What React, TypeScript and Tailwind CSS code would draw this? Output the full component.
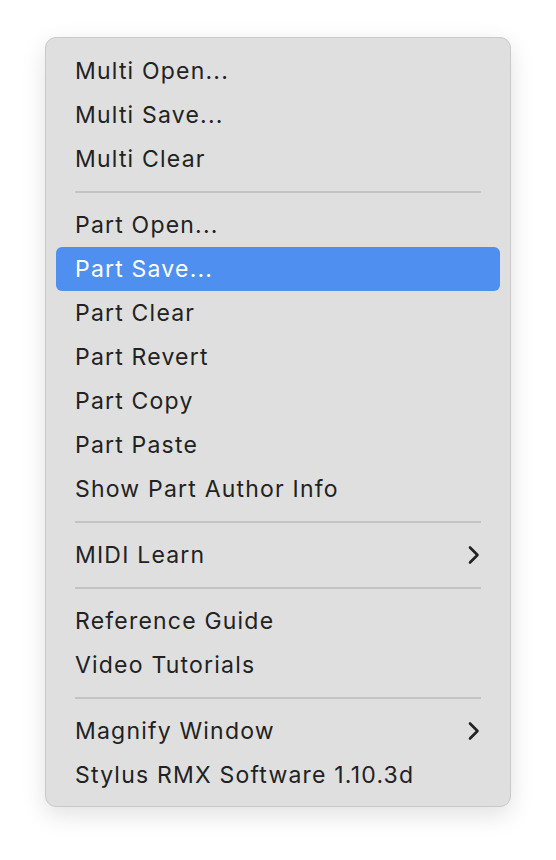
import React from "react";

type Item = { label: string; sub?: boolean; hl?: boolean } | "sep";

const items: Item[] = [
  { label: "Multi Open..." },
  { label: "Multi Save..." },
  { label: "Multi Clear" },
  "sep",
  { label: "Part Open..." },
  { label: "Part Save...", hl: true },
  { label: "Part Clear" },
  { label: "Part Revert" },
  { label: "Part Copy" },
  { label: "Part Paste" },
  { label: "Show Part Author Info" },
  "sep",
  { label: "MIDI Learn", sub: true },
  "sep",
  { label: "Reference Guide" },
  { label: "Video Tutorials" },
  "sep",
  { label: "Magnify Window", sub: true },
  { label: "Stylus RMX Software 1.10.3d" },
];

function Chevron({ color }: { color: string }) {
  return (
    <svg width="12" height="20" viewBox="0 0 12 20" fill="none">
      <path d="M2 2.5 L9.5 10 L2 17.5" stroke={color} strokeWidth="2.6" strokeLinecap="round" strokeLinejoin="round" />
    </svg>
  );
}

export default function App() {
  return (
    <div
      className="w-[556px] h-[860px] bg-white pl-[45px] pt-[37px]"
      style={{ fontFamily: "Inter, 'Noto Sans', sans-serif" }}
    >
      <div className="w-[466px] rounded-[11px] bg-[#dfdfdf] border border-[#c9c9c9] shadow-[0_8px_24px_rgba(0,0,0,0.12)] pt-[11px] pb-[9px]">
        {items.map((it, i) =>
          it === "sep" ? (
            <div key={i} className="h-[22px] flex items-center px-[29px]">
              <div className="h-[1.5px] w-full bg-[#c4c4c4]" />
            </div>
          ) : (
            <div key={i} className="px-[10px]">
              <div
                className={
                  "h-[44px] rounded-[6px] flex items-center justify-between pl-[19px] pr-[20px] text-[23px] " +
                  (it.hl ? "bg-[#4f8ff0] text-white" : "text-[#222222]")
                }
              >
                <span className="tracking-[1.2px]">{it.label}</span>
                {it.sub && <Chevron color="#222222" />}
              </div>
            </div>
          )
        )}
      </div>
    </div>
  );
}
